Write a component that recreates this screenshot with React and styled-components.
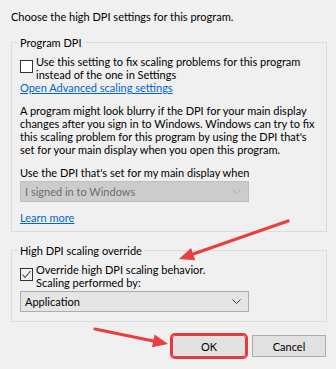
import styled, { createGlobalStyle } from 'styled-components';

const GlobalStyle = createGlobalStyle`
  html, body {
    margin: 0;
    padding: 0;
    background: #f0f0f0;
  }
  body {
    font-family: Lato, "Noto Sans", sans-serif;
    font-size: 11px;
    color: #000;
  }
`;

const Page = styled.div`
  position: relative;
  width: 336px;
  height: 369px;
  box-sizing: border-box;
  padding: 10px 9px 0 11px;
  display: flex;
  flex-direction: column;
  overflow: hidden;
`;

const Line = styled.div`
  line-height: 13px;
  margin-top: ${(p) => p.$mt || 0}px;
  white-space: nowrap;
`;

const Group = styled.fieldset`
  margin: ${(p) => p.$mt || 0}px 0 0 0;
  padding: 6px 8px ${(p) => p.$pb || 7}px 8px;
  border: 1px solid #dcdcdc;
  min-width: 0;
  display: flex;
  flex-direction: column;

  legend {
    padding: 0 2px;
    margin-left: -2px;
    line-height: 13px;
  }
`;

const CheckRow = styled.label`
  display: flex;
  align-items: flex-start;
  gap: 3px;
  line-height: 13px;
  white-space: nowrap;
`;

const Box = styled.span`
  flex: none;
  width: 11px;
  height: 11px;
  margin-top: 5px;
  border: 1px solid #333;
  background: ${(p) => (p.$checked ? '#f0f0f0' : '#fff')};
  display: flex;
  align-items: center;
  justify-content: center;
`;

const Link = styled.a`
  color: #0066cc;
  text-decoration: underline;
  line-height: 13px;
  margin-top: ${(p) => p.$mt || 0}px;
  align-self: flex-start;
  cursor: pointer;
`;

const Select = styled.div`
  width: 229px;
  height: 21px;
  box-sizing: border-box;
  margin-top: 2px;
  padding: 0 7px 0 4px;
  border: 1px solid ${(p) => (p.$disabled ? '#bfbfbf' : '#adadad')};
  background: ${(p) => (p.$disabled ? '#cccccc' : '#e5e5e5')};
  color: ${(p) => (p.$disabled ? '#6d6d6d' : '#000')};
  display: flex;
  align-items: center;
  justify-content: space-between;
`;

const Buttons = styled.div`
  display: flex;
  justify-content: flex-end;
  gap: 6px;
  margin-top: 13px;
  padding-right: 1px;
`;

const Button = styled.button`
  width: 74px;
  height: 22px;
  font: inherit;
  font-size: 11px;
  color: #000;
  background: #e1e1e1;
  border: 1px solid ${(p) => (p.$highlight ? '#e5393d' : '#adadad')};
  border-radius: ${(p) => (p.$highlight ? '3px' : '0')};
  outline: ${(p) => (p.$highlight ? '2px solid #e5393d' : 'none')};
  padding: 0;
`;

const Overlay = styled.svg`
  position: absolute;
  left: 0;
  top: 0;
  pointer-events: none;
`;

const Chevron = ({ color }) => (
  <svg width="9" height="5" viewBox="0 0 9 5">
    <path d="M0.5 0.5 L4.5 4.5 L8.5 0.5" fill="none" stroke={color} strokeWidth="1" />
  </svg>
);

const Tick = () => (
  <svg width="11" height="11" viewBox="0 0 11 11">
    <path d="M1.5 5.5 L4 8.5 L9.5 2" fill="none" stroke="#444" strokeWidth="1.1" />
  </svg>
);

const Arrow = ({ x1, y1, x2, y2 }) => {
  const a = Math.atan2(y2 - y1, x2 - x1);
  const len = 15;
  const w = 6.5;
  const bx = x2 - len * Math.cos(a);
  const by = y2 - len * Math.sin(a);
  const px = -Math.sin(a) * w;
  const py = Math.cos(a) * w;
  return (
    <g>
      <line x1={x1} y1={y1} x2={bx} y2={by} stroke="#e8403f" strokeWidth="3.2" strokeLinecap="round" />
      <polygon points={`${x2},${y2} ${bx + px},${by + py} ${bx - px},${by - py}`} fill="#e8403f" />
    </g>
  );
};

export default function App() {
  return (
    <>
      <GlobalStyle />
      <Page>
        <Line>Choose the high DPI settings for this program.</Line>

        <Group $mt={13}>
          <legend>Program DPI</legend>
          <CheckRow>
            <Box />
            <span>
              Use this setting to fix scaling problems for this program
              <br />
              instead of the one in Settings
            </span>
          </CheckRow>
          <Link>Open Advanced scaling settings</Link>
          <Line $mt={10}>A program might look blurry if the DPI for your main display</Line>
          <Line>changes after you sign in to Windows. Windows can try to fix</Line>
          <Line>this scaling problem for this program by using the DPI that's</Line>
          <Line>set for your main display when you open this program.</Line>
          <Line $mt={10}>Use the DPI that's set for my main display when</Line>
          <Select $disabled>
            <span>I signed in to Windows</span>
            <Chevron color="#a8a8a8" />
          </Select>
          <Link $mt={9}>Learn more</Link>
        </Group>

        <Group $mt={12} $pb={9}>
          <legend>High DPI scaling override</legend>
          <CheckRow>
            <Box $checked>
              <Tick />
            </Box>
            <span>
              Override high DPI scaling behavior.
              <br />
              Scaling performed by:
            </span>
          </CheckRow>
          <Select>
            <span>Application</span>
            <Chevron color="#333" />
          </Select>
        </Group>

        <Buttons>
          <Button $highlight>OK</Button>
          <Button>Cancel</Button>
        </Buttons>

        <Overlay width="336" height="369">
          <Arrow x1={288} y1={221} x2={179} y2={259} />
          <Arrow x1={95} y1={329} x2={168} y2={344} />
        </Overlay>
      </Page>
    </>
  );
}
